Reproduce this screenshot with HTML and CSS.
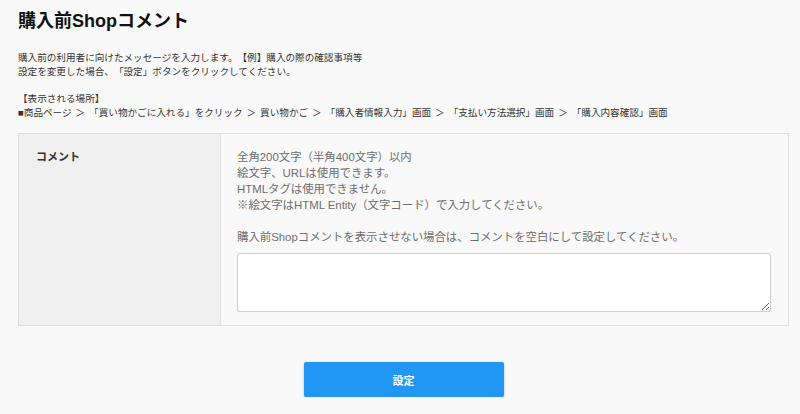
FILE: index.html
```html
<!DOCTYPE html>
<html lang="ja">
<head>
    <meta charset="UTF-8">
    <meta name="viewport" content="width=device-width, initial-scale=1.0">
    <title>購入前Shopコメント</title>
    <link rel="stylesheet" href="styles.css">
</head>
<body>
    <h1>購入前Shopコメント</h1>

    <!-- 説明 -->
    <div class="desc">
        <p>購入前の利用者に向けたメッセージを入力します。【例】購入の際の確認事項等<br>設定を変更した場合、「設定」ボタンをクリックしてください。</p>
        <p>【表示される場所】<br>■商品ページ ＞ 「買い物かごに入れる」をクリック ＞ 買い物かご ＞ 「購入者情報入力」画面 ＞ 「支払い方法選択」画面 ＞ 「購入内容確認」画面</p>
    </div>

    <!-- 入力フォーム -->
    <table class="form-table">
        <tr>
            <th>コメント</th>
            <td>
                <p class="note">全角200文字（半角400文字）以内<br>絵文字、URLは使用できます。<br>HTMLタグは使用できません。<br>※絵文字はHTML Entity（文字コード）で入力してください。</p>
                <p class="note">購入前Shopコメントを表示させない場合は、コメントを空白にして設定してください。</p>
                <textarea id="comment"></textarea>
            </td>
        </tr>
    </table>

    <div class="actions">
        <button class="submit" type="button">設定</button>
    </div>
</body>
</html>
```

FILE: styles.css
```css
body {
    margin: 0;
    padding: 9px 11px 0 18px;
    background-color: #f9f9f9;
    color: #222;
    font-family: "Liberation Sans", "Noto Sans CJK JP", sans-serif;
    text-spacing-trim: space-all;
}
h1 {
    margin: 0;
    font-size: 18px;
    line-height: 24px;
    font-weight: bold;
    color: #111;
}
.desc {
    margin-top: 18px;
    font-size: 9.6px;
    line-height: 14px;
    word-spacing: 1.3px;
    color: #333;
}
.desc p {
    margin: 0 0 13px;
}
.form-table {
    width: 100%;
    border-collapse: collapse;
    margin-top: 1px;
    border: 1px solid #dedede;
}
.form-table th {
    width: 184px;
    padding: 15px 0 0 17px;
    background-color: #f0f0f0;
    border-right: 1px solid #e2e2e2;
    text-align: left;
    vertical-align: top;
    font-size: 11px;
    line-height: 16px;
    color: #333;
}
.form-table td {
    padding: 15px 17px 13px 16px;
    background-color: #f9f9f9;
    vertical-align: top;
}
.note {
    margin: 0 0 16px;
    font-size: 11.4px;
    line-height: 16px;
    color: #6e6e6e;
}
.note + .note {
    margin-bottom: 8px;
}
textarea {
    display: block;
    box-sizing: border-box;
    width: 100%;
    height: 59px;
    margin: 0;
    border: 1px solid #cfcfcf;
    border-radius: 2px;
    background-color: #fff;
}
.actions {
    display: flex;
    justify-content: center;
    margin-top: 36px;
}
button.submit {
    width: 200px;
    height: 35px;
    border: none;
    border-radius: 2px;
    background-color: #2196f3;
    color: #fff;
    font-size: 11px;
    font-weight: bold;
    font-family: "Liberation Sans", "Noto Sans CJK JP", sans-serif;
    box-shadow: 0 1px 3px rgba(0, 0, 0, 0.25);
    cursor: pointer;
}
```
